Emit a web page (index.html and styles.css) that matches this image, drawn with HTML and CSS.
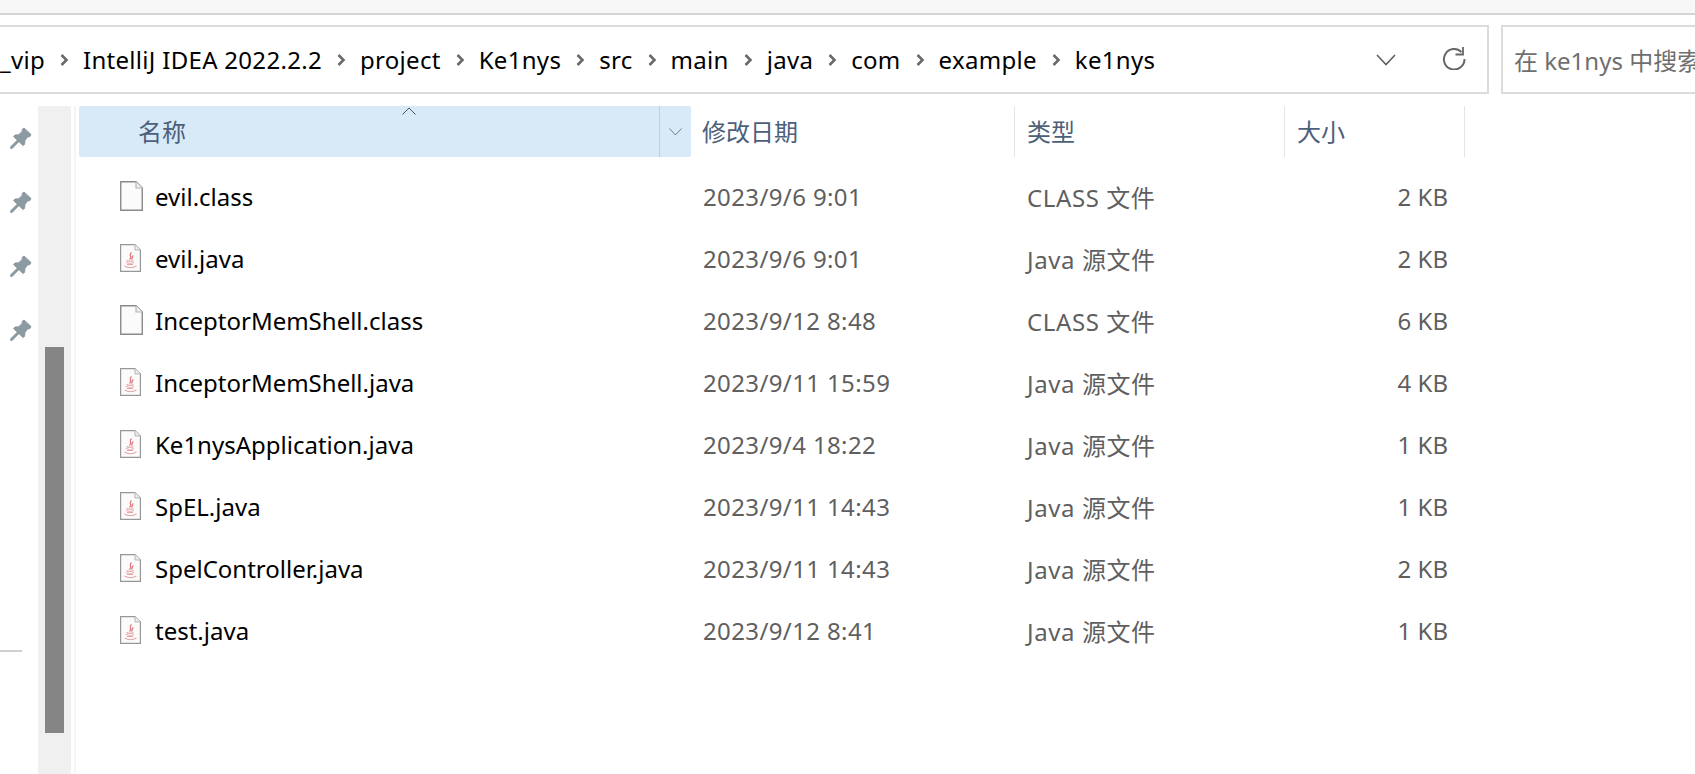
FILE: index.html
```html
<!DOCTYPE html>
<html lang="zh-CN">
<head>
<meta charset="utf-8">
<title>ke1nys</title>
<link rel="stylesheet" href="styles.css">
</head>
<body>
<svg class="defs" width="0" height="0" aria-hidden="true">
  <defs>
    <symbol id="chev" viewBox="0 0 10 14"><path d="M2.5 2 L7.5 7 L2.5 12" fill="none" stroke="#6a6a6a" stroke-width="2.6"/></symbol>
    <symbol id="pin" viewBox="0 0 22 22"><path d="M14 1 L21 7.5 L20 9.5 L17.5 10 L15 13.5 L14.5 17.5 L13 18.5 L3.5 9.5 L5 8 L8.5 7.8 L12 4.8 L12.3 2.2 Z" fill="#8e9aa2" stroke="#8e9aa2" stroke-width="1" stroke-linejoin="round"/><path d="M8 14 L1.5 20.5" stroke="#8e9aa2" stroke-width="3" stroke-linecap="round"/></symbol>
    <symbol id="blank" viewBox="0 0 23 30"><path d="M.75.75 H16 L22.25 7 V29.25 H.75 Z" fill="#fbfbfb" stroke="#8a8a8a" stroke-width="1.4"/><path d="M16 .75 V7 H22.25" fill="#efefef" stroke="#b5b5b5" stroke-width="1.2"/></symbol>
    <symbol id="java" viewBox="0 0 21 28"><path d="M.6.6 H15 L20.4 6 V27.4 H.6 Z" fill="#fbfbfb" stroke="#979797" stroke-width="1.2"/><path d="M15 .6 V6 H20.4" fill="#ececec" stroke="#b5b5b5"/><path d="M11.5 8.5 C8 11.5 13 12.5 9.5 15.5 M13.5 11.5 C11 13 13 14 11.5 15.5" fill="none" stroke="#e07a7e" stroke-width="1.3"/><path d="M6.5 16.5 C8 17.5 12 17.5 13.5 16.5 M6 18.5 C8 19.5 12 19.5 14 18.5 M7 20.5 H13 M4.5 22 C8 24 13 24 16.5 22" fill="none" stroke="#e6a3a5" stroke-width="1.1"/></symbol>
  </defs>
</svg>
<div class="topband"></div>
<header class="toolbar">
  <nav class="crumbs">
    <div class="path">
      <span>_vip</span><svg class="chev"><use href="#chev"/></svg>
      <span>IntelliJ IDEA 2022.2.2</span><svg class="chev"><use href="#chev"/></svg>
      <span>project</span><svg class="chev"><use href="#chev"/></svg>
      <span>Ke1nys</span><svg class="chev"><use href="#chev"/></svg>
      <span>src</span><svg class="chev"><use href="#chev"/></svg>
      <span>main</span><svg class="chev"><use href="#chev"/></svg>
      <span>java</span><svg class="chev"><use href="#chev"/></svg>
      <span>com</span><svg class="chev"><use href="#chev"/></svg>
      <span>example</span><svg class="chev"><use href="#chev"/></svg>
      <span>ke1nys</span>
    </div>
    <svg class="drop" viewBox="0 0 20 12"><path d="M1 1 L10 10.5 L19 1" fill="none" stroke="#5f5f5f" stroke-width="1.6"/></svg>
    <svg class="refresh" viewBox="0 0 24 24"><path d="M19.5 6 A10.3 10.3 0 1 0 22.5 13" fill="none" stroke="#666" stroke-width="2"/><path d="M21 1 V8.5 H13.5" fill="none" stroke="#666" stroke-width="1.8"/></svg>
  </nav>
  <div class="search">在 ke1nys 中搜索</div>
</header>
<main class="body">
  <aside class="quick">
    <div class="pins">
      <svg class="pin"><use href="#pin"/></svg>
      <svg class="pin"><use href="#pin"/></svg>
      <svg class="pin"><use href="#pin"/></svg>
      <svg class="pin"><use href="#pin"/></svg>
    </div>
    <div class="rule"></div>
  </aside>
  <div class="track"><div class="thumb"></div></div>
  <div class="strip"></div>
  <section class="list">
    <div class="head">
      <div class="hcell hname">
        <span>名称</span>
        <svg class="sort" viewBox="0 0 14 8"><path d="M.5 7.5 L7 1 L13.5 7.5" fill="none" stroke="#555" stroke-width="1"/></svg>
        <div class="split"><svg viewBox="0 0 13 8"><path d="M.5 .5 L6.5 7 L12.5 .5" fill="none" stroke="#6d7f92" stroke-width="1"/></svg></div>
      </div>
      <div class="hcell hdate">修改日期</div>
      <div class="hcell htype">类型</div>
      <div class="hcell hsize">大小</div>
    </div>
    <div class="row"><div class="name"><svg class="ic-blank"><use href="#blank"/></svg>evil.class</div><div class="date">2023/9/6 9:01</div><div class="kind">CLASS 文件</div><div class="size">2 KB</div></div>
    <div class="row"><div class="name"><svg class="ic-java"><use href="#java"/></svg>evil.java</div><div class="date">2023/9/6 9:01</div><div class="kind">Java 源文件</div><div class="size">2 KB</div></div>
    <div class="row"><div class="name"><svg class="ic-blank"><use href="#blank"/></svg>InceptorMemShell.class</div><div class="date">2023/9/12 8:48</div><div class="kind">CLASS 文件</div><div class="size">6 KB</div></div>
    <div class="row"><div class="name"><svg class="ic-java"><use href="#java"/></svg>InceptorMemShell.java</div><div class="date">2023/9/11 15:59</div><div class="kind">Java 源文件</div><div class="size">4 KB</div></div>
    <div class="row"><div class="name"><svg class="ic-java"><use href="#java"/></svg>Ke1nysApplication.java</div><div class="date">2023/9/4 18:22</div><div class="kind">Java 源文件</div><div class="size">1 KB</div></div>
    <div class="row"><div class="name"><svg class="ic-java"><use href="#java"/></svg>SpEL.java</div><div class="date">2023/9/11 14:43</div><div class="kind">Java 源文件</div><div class="size">1 KB</div></div>
    <div class="row"><div class="name"><svg class="ic-java"><use href="#java"/></svg>SpelController.java</div><div class="date">2023/9/11 14:43</div><div class="kind">Java 源文件</div><div class="size">2 KB</div></div>
    <div class="row"><div class="name"><svg class="ic-java"><use href="#java"/></svg>test.java</div><div class="date">2023/9/12 8:41</div><div class="kind">Java 源文件</div><div class="size">1 KB</div></div>
  </section>
</main>
</body>
</html>
```

FILE: styles.css
```css
* { box-sizing: border-box; }
html, body { margin: 0; height: 100%; }
body {
  width: 1695px;
  height: 774px;
  overflow: hidden;
  background: #fff;
  font-family: "Noto Sans", "Noto Sans CJK SC", sans-serif;
  font-size: 24px;
  display: flex;
  flex-direction: column;
}
.defs { position: absolute; }
.topband {
  height: 15px;
  flex: none;
  background: #f7f7f7;
  border-bottom: 2px solid #d4d4d4;
}
.toolbar {
  flex: none;
  display: flex;
  gap: 12px;
  height: 69px;
  margin-top: 10px;
}
.crumbs {
  width: 1489px;
  flex: none;
  display: flex;
  align-items: center;
  border: 2px solid #dcdcdc;
  border-left: 0;
}
.path {
  flex: 1;
  display: flex;
  align-items: center;
  color: #000;
  white-space: nowrap;
  letter-spacing: .3px;
}
.chev { width: 10px; height: 14px; margin: 0 14px; flex: none; }
.drop { width: 20px; height: 12px; flex: none; margin-right: 46px; }
.refresh { width: 24px; height: 24px; flex: none; margin: 0 21px 4px 0; }
.search {
  flex: 1;
  border: 2px solid #dcdcdc;
  border-right: 0;
  display: flex;
  align-items: center;
  padding-left: 11px;
  color: #6f6f6f;
  white-space: nowrap;
  overflow: hidden;
}
.body { flex: 1; display: flex; margin-top: 12px; min-height: 0; }
.quick { width: 38px; flex: none; display: flex; flex-direction: column; }
.pins { display: flex; flex-direction: column; gap: 42px; padding: 21px 0 0 10px; }
.pin { width: 22px; height: 22px; display: block; }
.rule { width: 22px; height: 2px; background: #d0d0d0; margin-top: 309px; }
.track { width: 33px; flex: none; background: #f0f0f0; padding: 241px 7px 40px; }
.thumb { height: 386px; background: #858585; width: 19px; }
.strip { width: 2px; flex: none; margin-left: 3px; background: #f5f5f5; }
.list { flex: 1; padding-left: 3px; }
.head { display: flex; height: 51px; margin-bottom: 8px; color: #4c607a; }
.hcell {
  display: flex;
  align-items: center;
  border-right: 1px solid #e5e5e5;
  padding-left: 12px;
  flex: none;
  padding-bottom: 2px;
}
.hname {
  width: 612px;
  background: #d8e9f8;
  border-right: 0;
  border-radius: 2px;
  padding-left: 59px;
  position: relative;
}
.sort { position: absolute; left: 323px; top: 1px; width: 14px; height: 8px; }
.split {
  position: absolute;
  right: 0;
  top: 0;
  bottom: 0;
  width: 32px;
  border-left: 1px solid #bccfe0;
  display: flex;
  align-items: center;
  justify-content: center;
}
.split svg { width: 13px; height: 8px; }
.hdate { width: 324px; padding-left: 11px; }
.htype { width: 270px; }
.hsize { width: 180px; }
.row {
  height: 62px;
  display: flex;
  align-items: center;
}
.name {
  width: 624px;
  flex: none;
  display: flex;
  align-items: center;
  color: #000;
  white-space: nowrap;
}
.ic-blank { width: 23px; height: 30px; margin: 0 12px 0 41px; flex: none; }
.ic-java { width: 21px; height: 28px; margin: 0 14px 0 41px; flex: none; }
.date, .kind, .size { flex: none; color: #5f5f5f; white-space: nowrap; }
.date { width: 324px; letter-spacing: .38px; }
.kind { width: 270px; letter-spacing: .6px; }
.size { width: 151px; text-align: right; }
```
